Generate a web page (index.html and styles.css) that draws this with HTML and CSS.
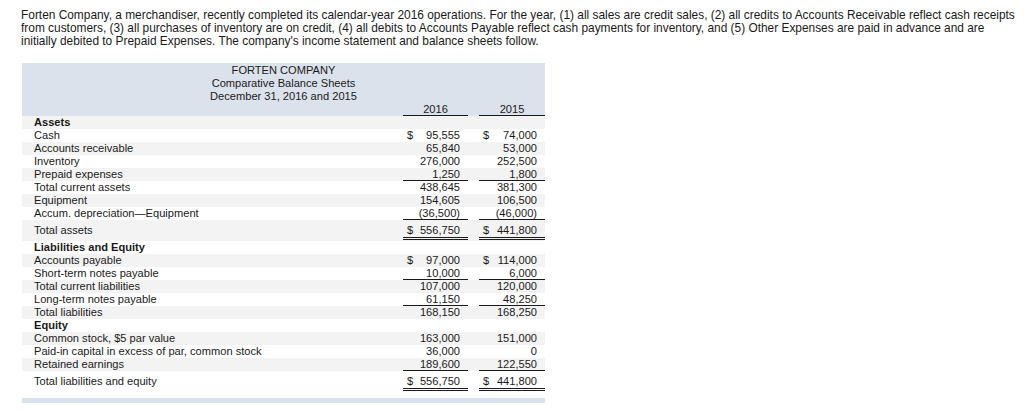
FILE: index.html
```html
<!DOCTYPE html>
<html>
<head>
<meta charset="utf-8">
<link rel="stylesheet" href="styles.css">
</head>
<body>
<div class="page">
  <p class="intro">Forten Company, a merchandiser, recently completed its calendar-year 2016 operations. For the year, (1) all sales are credit sales, (2) all credits to Accounts Receivable reflect cash receipts from customers, (3) all purchases of inventory are on credit, (4) all debits to Accounts Payable reflect cash payments for inventory, and (5) Other Expenses are paid in advance and are initially debited to Prepaid Expenses. The company's income statement and balance sheets follow.</p>

  <div class="sheet">
    <div class="head">
      <div class="title">FORTEN COMPANY</div>
      <div class="title">Comparative Balance Sheets</div>
      <div class="title">December 31, 2016 and 2015</div>
      <div class="row years">
        <div class="label"></div>
        <div class="cell year line">2016</div>
        <div class="cell year line">2015</div>
      </div>
    </div>

    <div class="row"><div class="label bold">Assets</div><div class="cell"></div><div class="cell"></div></div>
    <div class="row"><div class="label">Cash</div><div class="cell money"><span>$</span><span>95,555</span></div><div class="cell money"><span>$</span><span>74,000</span></div></div>
    <div class="row"><div class="label">Accounts receivable</div><div class="cell">65,840</div><div class="cell">53,000</div></div>
    <div class="row"><div class="label">Inventory</div><div class="cell">276,000</div><div class="cell">252,500</div></div>
    <div class="row"><div class="label">Prepaid expenses</div><div class="cell line">1,250</div><div class="cell line">1,800</div></div>
    <div class="row"><div class="label">Total current assets</div><div class="cell">438,645</div><div class="cell">381,300</div></div>
    <div class="row"><div class="label">Equipment</div><div class="cell">154,605</div><div class="cell">106,500</div></div>
    <div class="row"><div class="label">Accum. depreciation—Equipment</div><div class="cell line">(36,500)</div><div class="cell line">(46,000)</div></div>
    <div class="row total"><div class="label">Total assets</div><div class="cell money dbl"><span>$</span><span>556,750</span></div><div class="cell money dbl"><span>$</span><span>441,800</span></div></div>

    <div class="row"><div class="label bold">Liabilities and Equity</div><div class="cell"></div><div class="cell"></div></div>
    <div class="row"><div class="label">Accounts payable</div><div class="cell money"><span>$</span><span>97,000</span></div><div class="cell money"><span>$</span><span>114,000</span></div></div>
    <div class="row"><div class="label">Short-term notes payable</div><div class="cell line">10,000</div><div class="cell line">6,000</div></div>
    <div class="row"><div class="label">Total current liabilities</div><div class="cell">107,000</div><div class="cell">120,000</div></div>
    <div class="row"><div class="label">Long-term notes payable</div><div class="cell line">61,150</div><div class="cell line">48,250</div></div>
    <div class="row"><div class="label">Total liabilities</div><div class="cell">168,150</div><div class="cell">168,250</div></div>
    <div class="row"><div class="label bold">Equity</div><div class="cell"></div><div class="cell"></div></div>
    <div class="row"><div class="label">Common stock, $5 par value</div><div class="cell">163,000</div><div class="cell">151,000</div></div>
    <div class="row"><div class="label">Paid-in capital in excess of par, common stock</div><div class="cell">36,000</div><div class="cell">0</div></div>
    <div class="row"><div class="label">Retained earnings</div><div class="cell line">189,600</div><div class="cell line">122,550</div></div>
    <div class="row total"><div class="label">Total liabilities and equity</div><div class="cell money dbl"><span>$</span><span>556,750</span></div><div class="cell money dbl"><span>$</span><span>441,800</span></div></div>

    <div class="foot"></div>
  </div>
</div>
</body>
</html>
```

FILE: styles.css
```css
html, body {
  margin: 0;
  padding: 0;
  background: #fff;
}

body {
  font-family: "Liberation Sans", Arial, sans-serif;
  font-size: 11.1px;
  line-height: 13px;
  color: #1a1a1a;
}

.page {
  padding: 9px 0 0 21px;
}

.intro {
  margin: 0;
  width: 1000px;
  font-size: 11.9px;
  line-height: 13.2px;
}

.sheet {
  width: 523px;
  margin: 14px 0 0 1px;
}

.head {
  background: #dce2eb;
  padding-top: 1px;
}

.title {
  text-align: center;
  height: 13px;
}

.row {
  display: grid;
  grid-template-columns: 1fr 65px 66px;
  column-gap: 11px;
  height: 13px;
}

.row:nth-of-type(even) {
  background: #f3f3f3;
}

.row.years {
  background: transparent;
  height: 13px;
}

.label {
  padding-left: 12px;
  white-space: nowrap;
}

.bold {
  font-weight: bold;
}

.cell {
  box-sizing: border-box;
  text-align: right;
  padding: 0 8px 0 4px;
  white-space: nowrap;
}

.cell.year {
  text-align: center;
  padding: 0;
}

.cell.money {
  display: flex;
  justify-content: space-between;
}

.cell.line {
  border-bottom: 1px solid #1a1a1a;
  line-height: 12px;
  height: 13px;
}

.row.total {
  height: 21px;
}

.row.total .label {
  padding-top: 4px;
}

.cell.dbl {
  padding-top: 4px;
  height: 20px;
  border-bottom: 3px double #1a1a1a;
}

.foot {
  margin-top: 6px;
  height: 5px;
  background: #dce2eb;
}
```
